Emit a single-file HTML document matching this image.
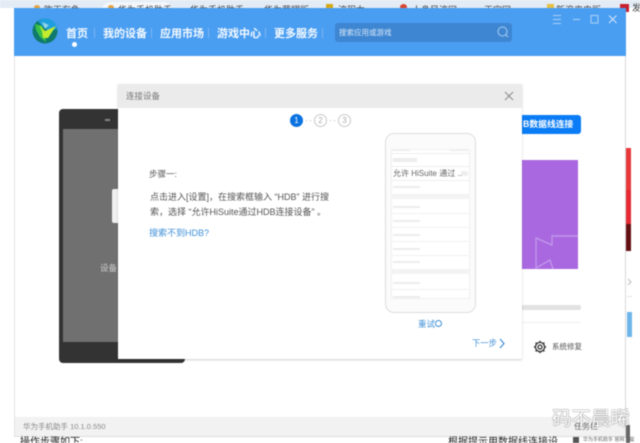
<!DOCTYPE html>
<html><head><meta charset="utf-8">
<style>
html,body{margin:0;padding:0;background:#fff;width:640px;height:443px;overflow:hidden}
body{font-family:"Liberation Sans","Noto Sans CJK SC",sans-serif;position:relative}
#r{position:absolute;left:0;top:0;width:640px;height:443px;overflow:hidden;filter:blur(.5px)}
.a{position:absolute;white-space:nowrap}
.n{color:#f4f9ff;font-size:11px;font-weight:700;top:26.5px;line-height:14px}
.s{background:#7db4ee;width:1px;height:10px;top:28px}
.t{font-size:9px;color:#444;top:4.5px;line-height:11px}
.l{position:absolute;height:1px;background:#e3e3e3}
.g{position:absolute;height:2px;background:#ededed}
.c{position:absolute;width:11px;height:11px;border:1px solid #c8c8c8;border-radius:50%;color:#aaa;font-size:8px;line-height:11px;text-align:center;top:114px}
.d{position:absolute;width:1px;height:1px;background:#bbb;top:120px}
</style></head><body><div id="r">
<!-- browser tab strip -->
<div class="a" style="left:0;top:0;width:640px;height:8px;background:#e3ebf5"></div>
<div class="a" style="left:102px;top:2px;width:70px;height:8px;background:#f3f6fb;border-radius:8px 8px 0 0"></div>
<div class="a t" style="left:44px">昨天有鱼</div>
<div class="a t" style="left:118px">华为手机助手</div>
<div class="a t" style="left:190px">华为手机助手</div>
<div class="a t" style="left:264px">华为荣耀版</div>
<div class="a t" style="left:338px">流程力</div>
<div class="a t" style="left:412px">人身风流网</div>
<div class="a t" style="left:484px">天空网</div>
<div class="a t" style="left:556px">新浪来电版</div>
<div class="a t" style="left:632px;top:3px">发</div>
<div class="a" style="left:34px;top:5px;width:6px;height:5px;background:#e8a33c;border-radius:50%"></div>
<div class="a" style="left:108px;top:5px;width:6px;height:5px;background:#e8a33c;border-radius:50%"></div>
<div class="a" style="left:326px;top:4px;width:7px;height:6px;background:#d8a814"></div>
<div class="a" style="left:400px;top:4px;width:7px;height:6px;background:#d9462e;border-radius:50%"></div>
<div class="a" style="left:547px;top:4px;width:7px;height:6px;background:#e6c040"></div>
<div class="a" style="left:620px;top:4px;width:9px;height:8px;background:#c8202c"></div>

<!-- window -->
<div class="a" style="left:14px;top:8px;width:612px;height:429px;background:#fff;border-right:1px solid #d9d9d9;border-left:1px solid #e3e3e3;border-bottom:1px solid #ddd;box-sizing:border-box"></div>
<div class="a" style="left:14px;top:8px;width:612px;height:48px;background:#4a9ef2"></div>

<!-- logo -->
<svg class="a" style="left:32px;top:18px" width="26" height="26" viewBox="0 0 26 26">
<circle cx="13" cy="13" r="12.5" fill="#0f7a6c"/>
<path d="M6 3 Q13-1.5 20 2 Q25 6 25 11 L17 13 L10 8Z" fill="#1f9ee0"/>
<path d="M3 6 L10 8 L13 15 L14 24 L8 19 L4 12Z" fill="#39c04a"/>
<path d="M7 7 L13 13 L24 8 L16 20 L11 20 L10 13Z" fill="#c4ec2e"/>
<path d="M10 4 L17 7 L13 11Z" fill="#8fd6e8"/>
</svg>

<!-- nav -->
<div class="a n" style="left:66px">首页</div>
<div class="a" style="left:72px;top:42px;width:5px;height:5px;border-radius:50%;background:#fff"></div>
<div class="a s" style="left:94px"></div>
<div class="a n" style="left:103px">我的设备</div>
<div class="a s" style="left:151px"></div>
<div class="a n" style="left:160px">应用市场</div>
<div class="a s" style="left:208px"></div>
<div class="a n" style="left:217px">游戏中心</div>
<div class="a s" style="left:265px"></div>
<div class="a n" style="left:274px">更多服务</div>
<div class="a s" style="left:322px"></div>

<!-- search -->
<div class="a" style="left:335px;top:23px;width:177px;height:19px;background:#3e86d2;border-radius:3px"></div>
<div class="a" style="left:339px;top:26px;font-size:7.5px;line-height:13px;color:#dbe9f8">搜索应用或游戏</div>
<svg class="a" style="left:495px;top:24px" width="16" height="16" viewBox="0 0 16 16" fill="none" stroke="#a9cff5" stroke-width="1"><circle cx="7.5" cy="7.5" r="4.5"/><path d="M11 11l2 2"/></svg>

<!-- window controls -->
<svg class="a" style="left:549px;top:12px" width="70" height="14" viewBox="0 0 70 14" fill="none" stroke="#a6cff7" stroke-width="1.1">
<path d="M4 3.5h8M4 7.5h8M4 11.5h8"/>
<path d="M24 7.5h7"/>
<rect x="42" y="3.5" width="7" height="7.5"/>
<path d="M60 3.5l7.5 7.5M67.5 3.5L60 11" stroke="#cfe4fa"/>
</svg>

<!-- bottom bar -->
<div class="a" style="left:15px;top:417px;width:610px;height:19px;background:#f2f2f2"></div>
<div class="a" style="left:23px;top:421px;font-size:7.5px;line-height:12px;color:#888">华为手机助手 10.1.0.550</div>

<!-- phone behind dialog -->
<div class="a" style="left:59px;top:109px;width:126px;height:254px;background:#333;border-radius:4px"></div>
<div class="a" style="left:63px;top:129px;width:118px;height:213px;background:#707070"></div>
<div class="a" style="left:105px;top:119px;width:5px;height:2px;background:#888"></div>
<div class="a" style="left:112px;top:189px;width:6px;height:34px;background:#f0f0f0;border-radius:2px 0 0 2px"></div>
<div class="a" style="left:100px;top:262px;font-size:8.5px;line-height:12px;color:#cfcfcf">设备</div>

<!-- right panel behind dialog -->
<div class="a" style="left:510px;top:115px;width:71px;height:19px;background:#0a7cf5;border-radius:3px"></div>
<div class="a" style="left:523px;top:118px;font-size:8.8px;font-weight:700;line-height:13px;color:#fff">B数据线连接</div>
<div class="a" style="left:510px;top:160px;width:68px;height:109px;background:#a968e0"></div>
<svg class="a" style="left:522px;top:230px" width="56" height="39" viewBox="0 0 56 39" fill="none" stroke="#c196ec" stroke-width="1.4"><path d="M56 6H30V15L14 8V38L28 30L31 39"/></svg>
<div class="a" style="left:510px;top:305px;width:71px;height:5px;background:#e2e2e2;border-radius:2px"></div>
<div class="l" style="left:510px;top:322px;width:71px;background:#eee"></div>
<svg class="a" style="left:533px;top:340px" width="14" height="14" viewBox="0 0 14 14" fill="none" stroke="#333" stroke-width="1.3"><circle cx="7" cy="7" r="2"/><circle cx="7" cy="7" r="4.6"/><path d="M7 .8v1.6M7 11.6v1.6M.8 7h1.6M11.6 7h1.6M2.6 2.6l1.1 1.1M10.3 10.3l1.1 1.1M11.4 2.6l-1.1 1.1M3.7 10.3l-1.1 1.1"/></svg>
<div class="a" style="left:552px;top:341px;font-size:7.5px;line-height:12px;color:#555">系统修复</div>

<!-- dialog -->
<div class="a" style="left:118px;top:84px;width:404px;height:275px;background:#fff;box-shadow:0 1px 2px rgba(0,0,0,.2)"></div>
<div class="a" style="left:118px;top:84px;width:404px;height:24px;background:#ebebeb"></div>
<div class="a" style="left:126px;top:90px;font-size:8.5px;line-height:13px;color:#777">连接设备</div>
<svg class="a" style="left:504px;top:91px" width="10" height="10" viewBox="0 0 10 10" stroke="#8a8a8a" stroke-width="1"><path d="M1 1l8 8M9 1l-8 8"/></svg>

<!-- steps -->
<div class="c" style="left:290px;background:#0a72e0;border-color:#0a72e0;color:#fff">1</div>
<div class="d" style="left:306px"></div><div class="d" style="left:310px"></div>
<div class="c" style="left:314px">2</div>
<div class="d" style="left:330px"></div><div class="d" style="left:334px"></div>
<div class="c" style="left:338px">3</div>

<!-- steps text -->
<div class="a" style="left:149px;top:168px;font-size:8.5px;line-height:12px;color:#555">步骤一:</div>
<div class="a" style="left:150px;top:190px;font-size:9px;line-height:14.5px;color:#555">点击进入[设置]，在搜索框输入 “HDB” 进行搜<br>索，选择 “允许HiSuite通过HDB连接设备” 。</div>
<div class="a" style="left:149px;top:226.5px;font-size:9px;line-height:13px;color:#3f8fd6">搜索不到HDB?</div>

<!-- phone illustration -->
<div class="a" style="left:385px;top:133px;width:89px;height:178px;border:1.5px solid #dedede;border-radius:9px;background:#fbfbfb"></div>
<div class="a" style="left:391px;top:149px;width:79px;height:150px;background:#fff;border:1px solid #f0f0f0;box-sizing:border-box"></div>
<div class="g" style="left:392px;top:150px;width:18px;height:1px"></div>
<div class="g" style="left:450px;top:150px;width:18px;height:1px"></div>
<div class="l" style="left:391px;top:153px;width:79px;background:#eee"></div>
<div class="g" style="left:393px;top:158px;width:24px;height:4px"></div>
<div class="l" style="left:391px;top:166px;width:79px;background:#eee"></div>
<div class="a" style="left:393px;top:168px;font-size:8px;line-height:12px;color:#666">允许 HiSuite 通过 ...</div>
<div class="a" style="left:461px;top:171px;width:7px;height:5px;background:#eee;border-radius:2px"></div>
<div class="l" style="left:391px;top:180px;width:79px;background:#eee"></div>
<div class="g" style="left:393px;top:186px;width:27px"></div>
<div class="a" style="left:391px;top:194px;width:79px;height:5px;background:#f3f3f3"></div>
<div class="g" style="left:393px;top:206px;width:27px"></div>
<div class="l" style="left:391px;top:213px;width:79px;background:#f2f2f2"></div>
<div class="g" style="left:393px;top:220px;width:27px"></div>
<div class="l" style="left:391px;top:227px;width:79px;background:#f2f2f2"></div>
<div class="g" style="left:393px;top:234px;width:27px"></div>
<div class="l" style="left:391px;top:241px;width:79px;background:#f2f2f2"></div>
<div class="g" style="left:393px;top:248px;width:27px"></div>
<div class="l" style="left:391px;top:255px;width:79px;background:#f2f2f2"></div>
<div class="g" style="left:393px;top:261px;width:27px"></div>
<div class="a" style="left:391px;top:269px;width:79px;height:5px;background:#f3f3f3"></div>
<div class="g" style="left:393px;top:282px;width:27px"></div>
<div class="l" style="left:391px;top:289px;width:79px;background:#f2f2f2"></div>
<div class="g" style="left:393px;top:296px;width:27px"></div>

<div class="a" style="left:418px;top:318px;font-size:8.5px;line-height:12px;color:#3f8fd6">重试</div>
<svg class="a" style="left:434px;top:319px" width="9" height="9" viewBox="0 0 9 9" fill="none" stroke="#3f8fd6" stroke-width="1"><circle cx="4.5" cy="4.5" r="3"/></svg>
<div class="a" style="left:472px;top:337px;font-size:8.3px;line-height:13px;color:#3f8fd6">下一步</div>
<svg class="a" style="left:498px;top:338px" width="8" height="11" viewBox="0 0 8 11" fill="none" stroke="#3f8fd6" stroke-width="1.2"><path d="M2 1l4 4.5L2 10"/></svg>

<!-- page content below window -->
<div class="a" style="left:20px;top:436px;font-size:10px;line-height:13px;color:#222">操作步骤如下:</div>
<div class="a" style="left:448px;top:436px;font-size:10px;line-height:13px;color:#222">根据提示用数据线连接设</div>
<div class="a" style="left:573px;top:437px;width:6px;height:6px;background:#555"></div>
<div class="a" style="left:583px;top:437px;font-size:5px;line-height:7px;color:#666">华为手机助手 官网下载</div>
<div class="a" style="left:626px;top:425px;width:4px;height:18px;background:#666"></div>

<!-- right edge ads -->
<div class="a" style="left:626px;top:148px;width:5px;height:42px;background:#e9383a"></div>
<div class="a" style="left:626px;top:190px;width:5px;height:34px;background:#e52a33"></div>
<div class="a" style="left:626px;top:224px;width:5px;height:27px;background:#651014"></div>
<svg class="a" style="left:627px;top:278px" width="5" height="8" viewBox="0 0 5 8" fill="none" stroke="#bbb"><path d="M1 1l3 3-3 3"/></svg>
<div class="l" style="left:627px;top:296px;width:5px"></div>
<div class="a" style="left:627px;top:312px;width:5px;height:25px;background:#6eb6ea"></div>

<!-- watermark -->
<div class="a" style="left:574px;top:421px;font-size:8px;line-height:11px;color:#666">任务栏</div>
<div class="a" style="left:552px;top:407px;font-size:19.5px;line-height:24px;color:#fff;text-shadow:0 0 1px #666,0 0 1px #666">码不晨晞</div>
</div></body></html>
